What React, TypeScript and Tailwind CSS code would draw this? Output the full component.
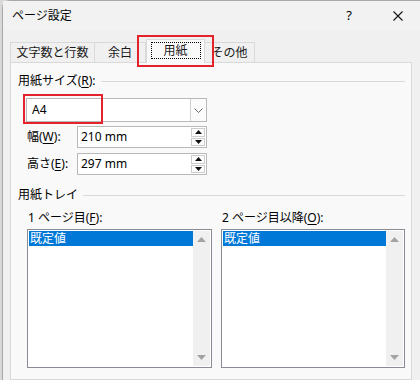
import React from "react";

const font = { fontFamily: '"Noto Sans", "Noto Sans CJK JP", sans-serif' };

function Key({ k }: { k: string }) {
  return <span className="underline underline-offset-2">{k}</span>;
}

function Spin() {
  return (
    <div className="flex w-[15px] flex-col gap-[1px] py-[1px] pr-[1px]">
      <div className="flex h-[9px] items-center justify-center border border-[#cccccc] bg-[#fdfdfd]">
        <svg width="7" height="4" viewBox="0 0 7 4">
          <polygon points="3.5,0 7,4 0,4" fill="#111" />
        </svg>
      </div>
      <div className="flex h-[9px] items-center justify-center border border-[#cccccc] bg-[#fdfdfd]">
        <svg width="7" height="4" viewBox="0 0 7 4">
          <polygon points="0,0 7,0 3.5,4" fill="#111" />
        </svg>
      </div>
    </div>
  );
}

function NumField({ label, value, top }: { label: React.ReactNode; value: string; top: string }) {
  return (
    <div className={`flex items-center ${top}`}>
      <div className="ml-[9px] w-[50px] text-[12px] leading-none text-black">{label}</div>
      <div className="flex h-[22px] w-[130px] items-stretch border border-[#b9b9b9] bg-white">
        <div className="flex flex-1 items-center pl-[3px] text-[12px] leading-none">{value}</div>
        <Spin />
      </div>
    </div>
  );
}

function ListBox({ w }: { w: string }) {
  return (
    <div className={`flex h-[139px] ${w} border border-[#8b8b95] bg-white p-[1px]`}>
      <div className="flex-1">
        <div className="flex h-[15px] items-center bg-[#0078d7] pl-[1px] text-[12px] leading-none text-white">
          既定値
        </div>
      </div>
      <div className="flex w-[17px] flex-col items-center justify-between bg-[#f0f0f0] py-[6px]">
        <svg width="9" height="5" viewBox="0 0 9 5">
          <polygon points="4.5,0 9,5 0,5" fill="#a3a3a3" />
        </svg>
        <svg width="9" height="5" viewBox="0 0 9 5">
          <polygon points="0,0 9,0 4.5,5" fill="#a3a3a3" />
        </svg>
      </div>
    </div>
  );
}

function Header({ text, top }: { text: React.ReactNode; top: string }) {
  return (
    <div className={`flex h-[16px] items-center gap-[5px] ${top}`}>
      <span className="whitespace-nowrap text-[12px] leading-none text-black">{text}</span>
      <div className="h-px flex-1 bg-[#d9d9d9]" />
    </div>
  );
}

export default function App() {
  return (
    <div className="h-[380px] w-[420px] overflow-hidden bg-[#d8d8d8]" style={font}>
      <div className="ml-[2px] flex h-[380px] flex-col rounded-tl-[8px] border-l border-t border-[#a8a8a8] bg-[#f0f0f0]">
        {/* title bar */}
        <div className="flex h-[29px] items-center bg-[#f2f2f2] pl-[9px]">
          <span className="text-[12px] leading-none text-black">ページ設定</span>
          <span className="ml-auto mr-[41px] text-[13px] leading-none text-black">?</span>
          <svg className="mr-[17px]" width="10" height="10" viewBox="0 0 10 10">
            <path d="M0.5 0.5 L9.5 9.5 M9.5 0.5 L0.5 9.5" stroke="#111" strokeWidth="1.1" />
          </svg>
        </div>

        {/* tabs */}
        <div className="relative flex items-end pl-[7px] pt-[9px]">
          <div className="flex h-[20px] w-[85px] items-center justify-center border border-b-0 border-[#d9d9d9] bg-[#f0f0f0] text-[12px] leading-none text-[#1a1a1a]">
            文字数と行数
          </div>
          <div className="flex h-[20px] w-[51px] items-center justify-center border border-b-0 border-l-0 border-[#d9d9d9] bg-[#f0f0f0] text-[12px] leading-none text-[#1a1a1a]">
            余白
          </div>
          <div className="relative z-10 -mb-px flex h-[24px] w-[59px] items-center justify-center border border-b-0 border-[#d9d9d9] bg-[#f9f9f9] pb-[2px] text-[12px] leading-none text-[#1a1a1a]">
            <div className="flex h-[17px] w-[50px] items-center justify-center border border-dotted border-black">
              用紙
            </div>
          </div>
          <div className="flex h-[20px] w-[50px] items-center justify-center border border-b-0 border-l-0 border-[#d9d9d9] bg-[#f0f0f0] text-[12px] leading-none text-[#1a1a1a]">
            その他
          </div>
          <div className="pointer-events-none absolute left-[134px] top-[5px] z-20 h-[32px] w-[77px] border-2 border-[#e3222a]" />
        </div>

        {/* panel */}
        <div className="ml-[7px] flex w-[402px] flex-1 flex-col border border-[#d9d9d9] bg-[#f9f9f9] pl-[7px] pr-[6px] pt-[10px]">
          <Header
            top=""
            text={
              <>
                用紙サイズ(<Key k="R" />):
              </>
            }
          />

          <div className="relative ml-[8px] mt-[9px] flex h-[24px] w-[181px] items-stretch border border-[#b9b9b9] bg-white">
            <div className="flex flex-1 items-center pl-[5px] text-[12px] leading-none">A4</div>
            <div className="flex w-[16px] items-center justify-center border-l border-[#d0d0d0] bg-[#fbfbfb]">
              <svg width="9" height="5" viewBox="0 0 9 5">
                <polyline points="0.5,0.5 4.5,4.5 8.5,0.5" fill="none" stroke="#555" strokeWidth="0.9" />
              </svg>
            </div>
            <div className="pointer-events-none absolute left-[-4px] top-[-5px] h-[30px] w-[80px] border-2 border-[#e3222a]" />
          </div>

          <NumField
            top="mt-[4px]"
            label={
              <>
                幅(<Key k="W" />):
              </>
            }
            value="210 mm"
          />
          <NumField
            top="mt-[5px]"
            label={
              <>
                高さ(<Key k="E" />):
              </>
            }
            value="297 mm"
          />

          <Header top="mt-[12px]" text="用紙トレイ" />

          <div className="mt-[7px] flex h-[16px] items-center text-[12px] leading-none text-black">
            <span className="ml-[10px] w-[194px]">
              1 ページ目(<Key k="F" />):
            </span>
            <span>
              2 ページ目以降(<Key k="O" />):
            </span>
          </div>

          <div className="ml-[9px] mt-[3px] flex gap-[9px]">
            <ListBox w="w-[185px]" />
            <ListBox w="w-[184px]" />
          </div>
        </div>
      </div>
    </div>
  );
}
